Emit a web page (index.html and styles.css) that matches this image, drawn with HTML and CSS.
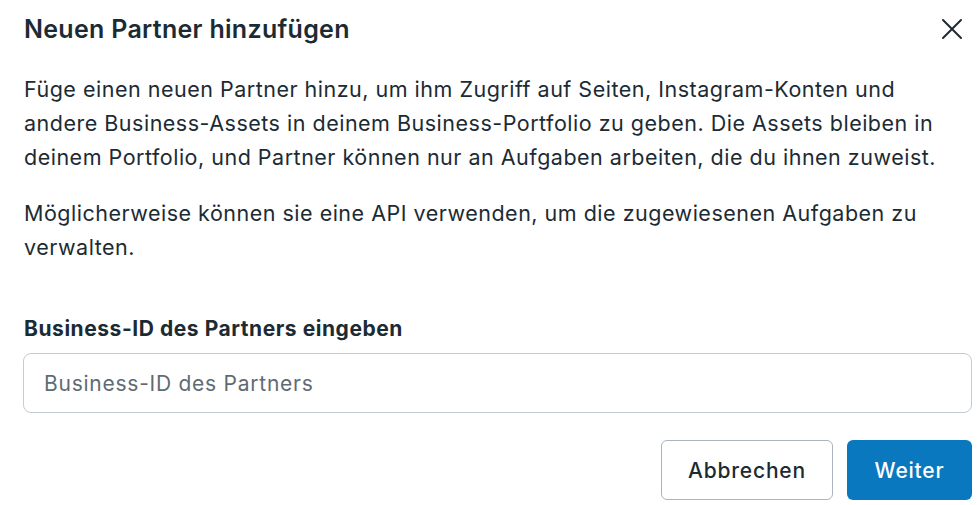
FILE: index.html
```html
<!DOCTYPE html>
<html lang="de">
<head>
<meta charset="utf-8">
<link rel="stylesheet" href="styles.css">
</head>
<body>
<div class="dialog">
  <header class="head">
    <h1 class="title">Neuen Partner hinzufügen</h1>
    <button class="close" aria-label="Schließen">
      <svg width="24" height="24" viewBox="0 0 24 24"><path d="M3 3L21 21M21 3L3 21" stroke="#1c2b33" stroke-width="2" stroke-linecap="round"/></svg>
    </button>
  </header>
  <p class="text">Füge einen neuen Partner hinzu, um ihm Zugriff auf Seiten, Instagram-Konten und andere Business-Assets in deinem Business-Portfolio zu geben. Die Assets bleiben in deinem Portfolio, und Partner können nur an Aufgaben arbeiten, die du ihnen zuweist.</p>
  <p class="text">Möglicherweise können sie eine API verwenden, um die zugewiesenen Aufgaben zu verwalten.</p>
  <label class="label" for="bid">Business-ID des Partners eingeben</label>
  <input class="input" id="bid" placeholder="Business-ID des Partners">
  <div class="actions">
    <button class="btn btn-secondary">Abbrechen</button>
    <button class="btn btn-primary">Weiter</button>
  </div>
</div>
</body>
</html>
```
FILE: styles.css
```css
html, body { margin: 0; padding: 0; background: #fff; }
body { font-family: "Inter", "Roboto", "Liberation Sans", sans-serif; color: #1c2b33; }
.dialog { padding: 0 8px 0 24px; width: 948px; }
.head { display: flex; align-items: center; justify-content: space-between; height: 58px; }
.title { margin: 0; font-size: 25px; font-weight: 600; letter-spacing: 0.3px; }
.close { border: 0; background: none; padding: 0; margin-right: 8px; width: 24px; height: 24px; display: flex; }
.text { margin: 14px 0 0; max-width: 940px; font-size: 21.5px; line-height: 34px; letter-spacing: 0.5px; }
.text + .text { margin-top: 22px; }
.label { display: block; margin-top: 51px; font-size: 21px; font-weight: 700; line-height: 28px; letter-spacing: 0.55px; }
.input { display: block; box-sizing: border-box; width: 949px; margin: 10px 0 0 -1px; height: 60px; border: 1.5px solid #c4ccd3; border-radius: 8px; padding: 0 20px; font: inherit; font-size: 21px; letter-spacing: 0.75px; color: #1c2b33; }
.input::placeholder { color: #5f6b74; }
.actions { display: flex; justify-content: flex-end; gap: 14px; margin-top: 27px; }
.btn { height: 60px; border-radius: 6px; font: inherit; font-size: 21px; font-weight: 500; letter-spacing: 0.8px; padding: 0; }
.btn-secondary { background: #fff; border: 1.5px solid #a8b4bf; color: #1c2b33; width: 172px; }
.btn-primary { background: #0a78be; border: 0; color: #fff; width: 125px; }
```
